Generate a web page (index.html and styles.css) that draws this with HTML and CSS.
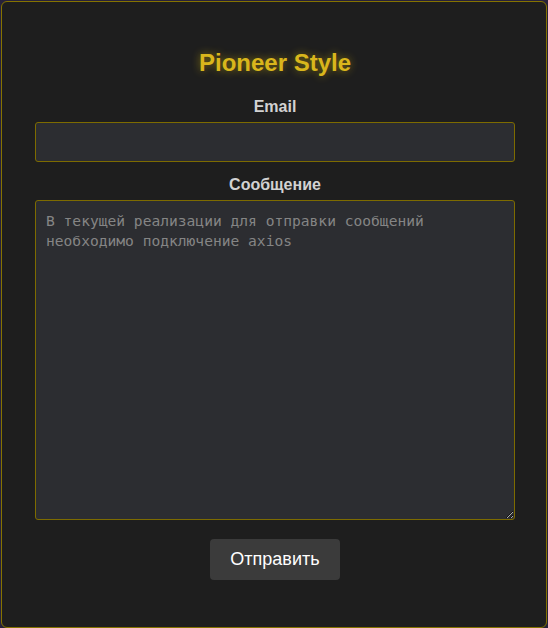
FILE: index.html
```html
<!DOCTYPE html>
<html lang="ru">
<head>
    <meta charset="UTF-8">
    <meta name="viewport" content="width=device-width, initial-scale=1.0">
    <title>Pioneer Style</title>
    <link rel="stylesheet" href="styles.css">
</head>
<body>

    <div class="contact-container">
        <h1 class="title">Pioneer Style</h1>

        <form class="contact-form">
            <label for="email">Email</label>
            <input type="email" id="email">

            <label for="message">Сообщение</label>
            <textarea id="message" placeholder="В текущей реализации для отправки сообщений необходимо подключение axios"></textarea>

            <button type="button">Отправить</button>
        </form>
    </div>

</body>
</html>
```

FILE: styles.css
```css
body {
    margin: 0;
    background-color: #27223a;
    font-family: "Liberation Sans", Arial, sans-serif;
}

.contact-container {
    margin: 1px 1px 0 1px;
    padding: 47px 31px 47px 33px;
    border: 1px solid #857300;
    border-radius: 6px;
    background-color: #1e1e1e;
}

.title {
    margin: 0 0 21px;
    font-size: 24px;
    line-height: 28px;
    text-align: center;
    color: #d9b61c;
    text-shadow: 0 0 8px rgba(255, 215, 0, 0.45);
}

.contact-form {
    display: flex;
    flex-direction: column;
}

label {
    font-size: 16px;
    font-weight: bold;
    line-height: 18px;
    text-align: center;
    color: #d2d2d2;
    margin-bottom: 6px;
}

input, textarea {
    box-sizing: border-box;
    width: 100%;
    background-color: #2c2d31;
    border: 1px solid #7d6b00;
    border-radius: 3px;
    color: #ddd;
}

input {
    height: 40px;
    margin-bottom: 14px;
}

textarea {
    height: 320px;
    padding: 10px;
    font-family: "DejaVu Sans Mono", monospace;
    font-size: 14.6px;
    line-height: 20px;
    resize: vertical;
}

textarea::placeholder {
    color: #858585;
}

button {
    align-self: center;
    margin-top: 19px;
    padding: 10px 20px;
    background-color: #3b3b3b;
    color: #fff;
    border: none;
    border-radius: 4px;
    font-family: "Liberation Sans", Arial, sans-serif;
    font-size: 18px;
    line-height: 21px;
    cursor: pointer;
}
```
